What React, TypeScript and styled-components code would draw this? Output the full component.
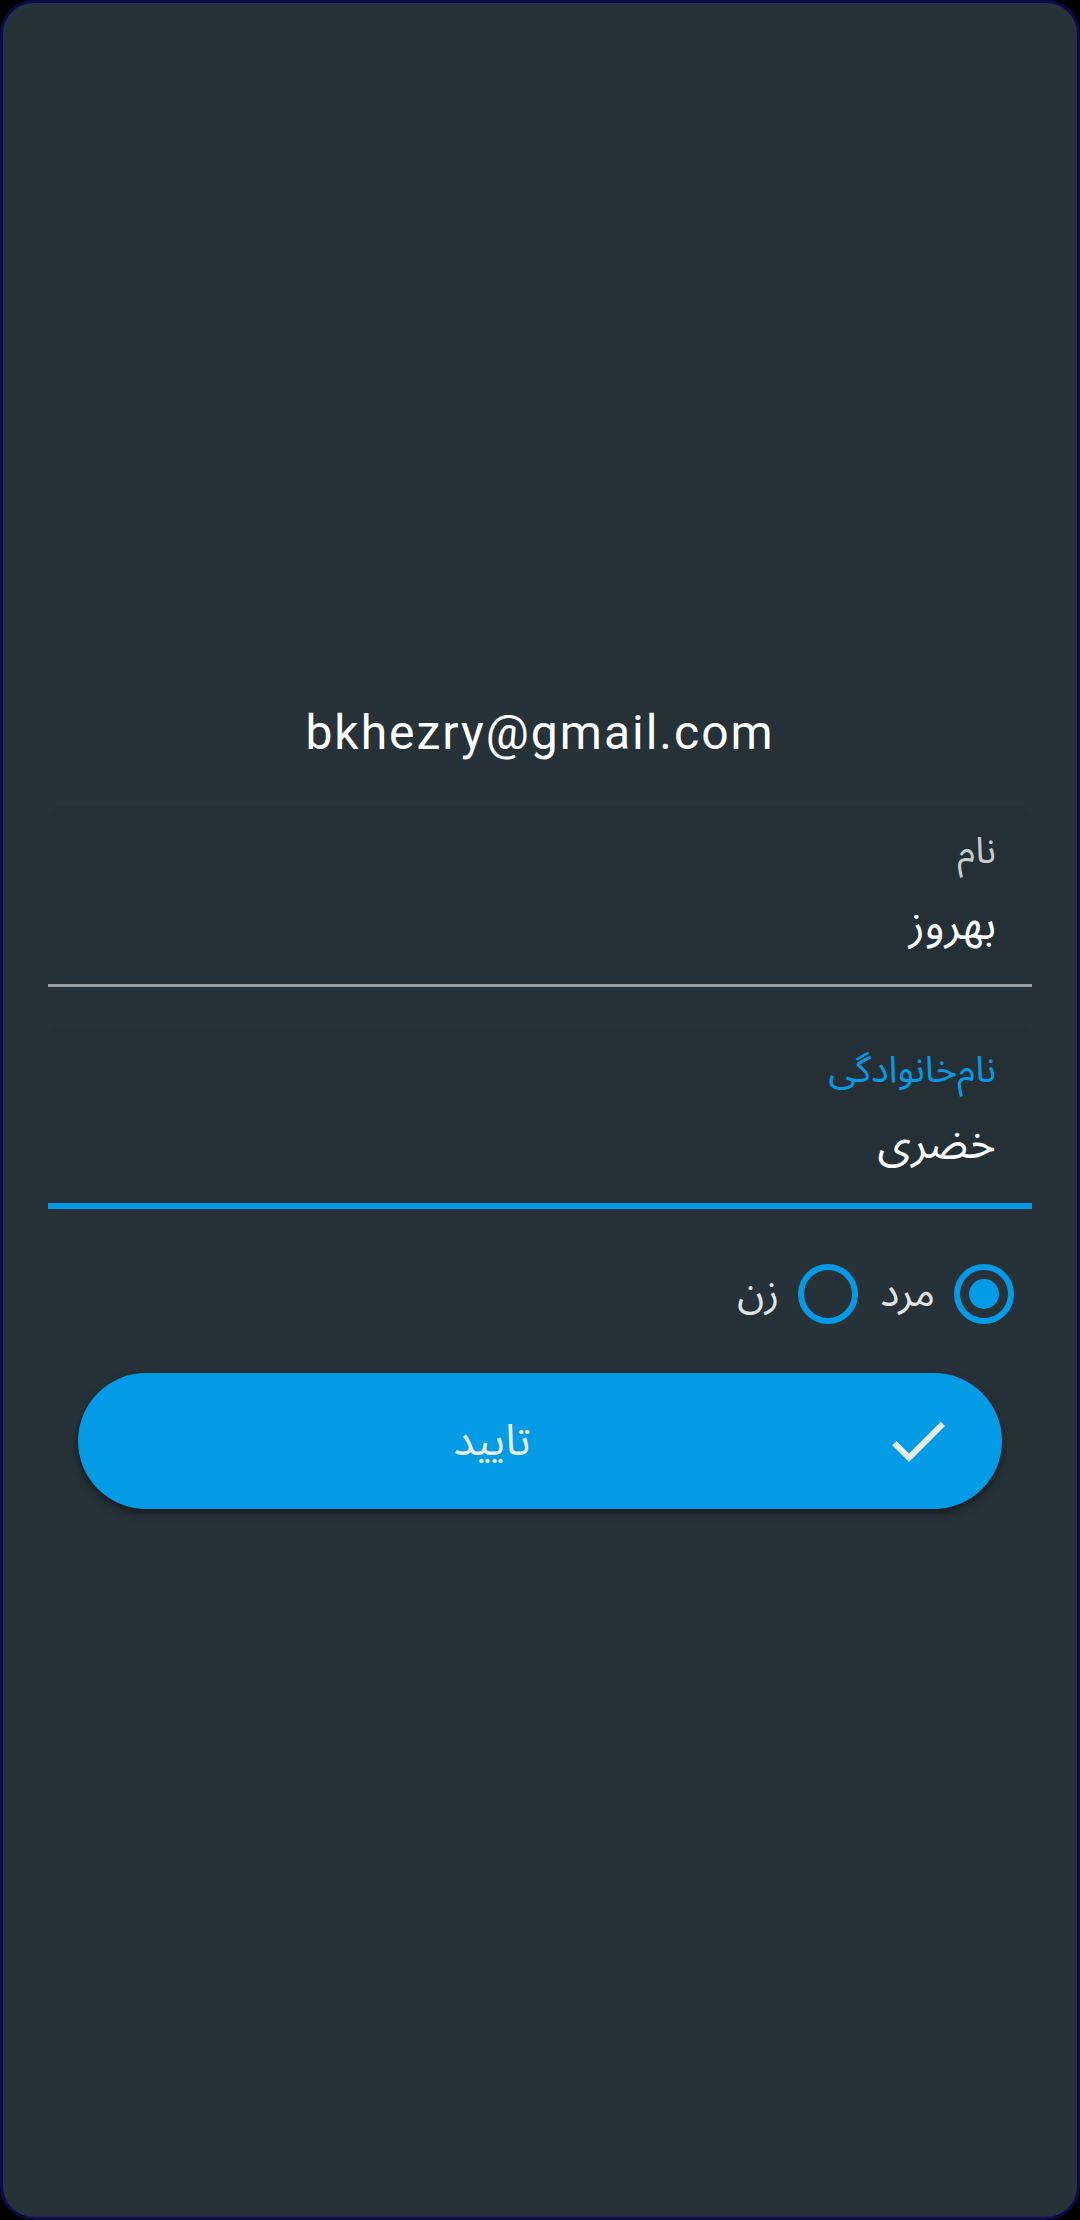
import React from "react";
import styled, { createGlobalStyle } from "styled-components";

const Global = createGlobalStyle`
  html, body { margin: 0; padding: 0; background: #000; }
  * { box-sizing: border-box; }
`;

const PERSIAN = `"Noto Sans Arabic", "DejaVu Sans", "Noto Sans", sans-serif`;

const Screen = styled.div`
  width: 1080px;
  height: 2220px;
  background: #263238;
  border: 3px solid #0b0b4e;
  border-radius: 34px;
  display: flex;
  flex-direction: column;
  align-items: center;
  padding-top: 702px;
  overflow: hidden;
`;

const Email = styled.div`
  font-family: Roboto, "Liberation Sans", sans-serif;
  font-size: 48px;
  line-height: 56px;
  letter-spacing: 2px;
  color: #ffffff;
  margin-bottom: 45px;
`;

const Form = styled.div`
  width: 984px;
  display: flex;
  flex-direction: column;
  direction: rtl;
`;

const Field = styled.div<{ $focused?: boolean }>`
  background: rgba(0, 0, 0, 0.035);
  border-radius: 12px 12px 0 0;
  border-bottom: ${(p) => (p.$focused ? "6px solid #039be5" : "3px solid #9e9e9e")};
  padding: 19px 36px 0;
  height: ${(p) => (p.$focused ? "184px" : "181px")};
  display: flex;
  flex-direction: column;
  margin-bottom: ${(p) => (p.$focused ? "0" : "38px")};
`;

const Label = styled.div<{ $focused?: boolean }>`
  font-family: ${PERSIAN};
  font-size: 37px;
  line-height: 52px;
  color: ${(p) => (p.$focused ? "#039be5" : "#c9cbcc")};
`;

const Value = styled.div`
  font-family: ${PERSIAN};
  font-size: 44px;
  line-height: 66px;
  margin-top: 15px;
  color: #ffffff;
`;

const RadioGroup = styled.div`
  display: flex;
  flex-direction: row;
  align-items: center;
  gap: 22px;
  padding: 0 18px;
  margin-top: 55px;
  height: 60px;
`;

const RadioItem = styled.label`
  display: flex;
  align-items: center;
  gap: 19px;
`;

const Circle = styled.span<{ $checked?: boolean }>`
  width: 60px;
  height: 60px;
  border-radius: 50%;
  border: 6px solid #039be5;
  display: flex;
  align-items: center;
  justify-content: center;
  &::after {
    content: "";
    width: 30px;
    height: 30px;
    border-radius: 50%;
    background: ${(p) => (p.$checked ? "#039be5" : "transparent")};
  }
`;

const RadioText = styled.span`
  font-family: ${PERSIAN};
  font-size: 40px;
  line-height: 60px;
  color: #e3e4e5;
`;

const Button = styled.button`
  margin: 49px 30px 0;
  height: 136px;
  border: none;
  border-radius: 68px;
  background: #039be5;
  box-shadow: 0 5px 10px rgba(0, 0, 0, 0.35), 0 2px 4px rgba(0, 0, 0, 0.2);
  display: flex;
  align-items: center;
  padding: 0 48px 0 0;
  direction: rtl;
  cursor: pointer;
`;

const ButtonText = styled.span`
  flex: 1;
  text-align: center;
  font-family: ${PERSIAN};
  font-size: 43px;
  color: #e6eef2;
  padding-left: 24px;
`;

const CheckIcon = () => (
  <svg width="72" height="72" viewBox="0 0 24 24" fill="#e6eef2">
    <path d="M9 16.17L4.83 12l-1.42 1.41L9 19 21 7l-1.41-1.41z" />
  </svg>
);

export default function App() {
  return (
    <>
      <Global />
      <Screen>
        <Email>bkhezry@gmail.com</Email>
        <Form>
          <Field>
            <Label>نام</Label>
            <Value>بهروز</Value>
          </Field>
          <Field $focused>
            <Label $focused>نام‌خانوادگی</Label>
            <Value>خضری</Value>
          </Field>
          <RadioGroup>
            <RadioItem>
              <Circle $checked />
              <RadioText>مرد</RadioText>
            </RadioItem>
            <RadioItem>
              <Circle />
              <RadioText>زن</RadioText>
            </RadioItem>
          </RadioGroup>
          <Button>
            <CheckIcon />
            <ButtonText>تایید</ButtonText>
          </Button>
        </Form>
      </Screen>
    </>
  );
}
